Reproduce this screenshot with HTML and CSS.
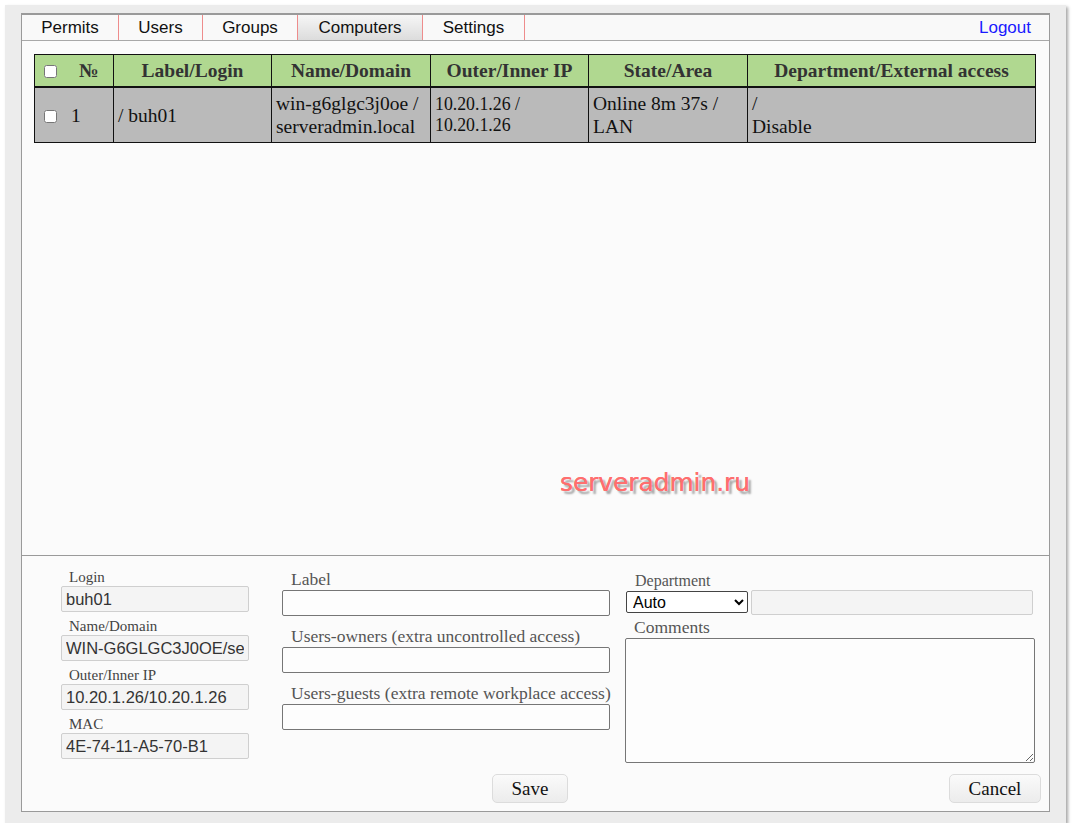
FILE: index.html
```html
<!DOCTYPE html>
<html>
<head>
<meta charset="utf-8">
<link rel="stylesheet" href="styles.css">
</head>
<body>
<div class="window">
  <div class="panel">
    <div class="tabbar">
      <div class="tab t-permits">Permits</div>
      <div class="tab t-users">Users</div>
      <div class="tab t-groups">Groups</div>
      <div class="tab t-computers active">Computers</div>
      <div class="tab t-settings">Settings</div>
      <a class="logout" href="#">Logout</a>
    </div>
    <div class="content">
      <table class="grid">
        <colgroup>
          <col style="width:79px"><col style="width:158px"><col style="width:159px"><col style="width:158px"><col style="width:159px"><col>
        </colgroup>
        <thead>
          <tr>
            <th class="c-first"><input type="checkbox" class="cb"><span class="num-h">№</span></th>
            <th>Label/Login</th>
            <th>Name/Domain</th>
            <th>Outer/Inner IP</th>
            <th>State/Area</th>
            <th>Department/External access</th>
          </tr>
        </thead>
        <tbody>
          <tr>
            <td class="c-first"><input type="checkbox" class="cb"><span class="num">1</span></td>
            <td>/ buh01</td>
            <td>win-g6glgc3j0oe /<br>serveradmin.local</td>
            <td class="ip">10.20.1.26 /<br>10.20.1.26</td>
            <td>Online 8m 37s /<br>LAN</td>
            <td>/<br>Disable</td>
          </tr>
        </tbody>
      </table>
      <div class="watermark">serveradmin.ru</div>
    </div>
    <div class="form">
      <div class="form-row">
        <div class="col-left">
          <label class="small-label">Login</label>
          <input class="ro" type="text" value="buh01" readonly>
          <label class="small-label gap">Name/Domain</label>
          <input class="ro" type="text" value="WIN-G6GLGC3J0OE/serveradmin.local" readonly>
          <label class="small-label gap">Outer/Inner IP</label>
          <input class="ro" type="text" value="10.20.1.26/10.20.1.26" readonly>
          <label class="small-label gap">MAC</label>
          <input class="ro" type="text" value="4E-74-11-A5-70-B1" readonly>
        </div>
        <div class="col-mid">
          <label class="big-label">Label</label>
          <input class="txt" type="text">
          <label class="big-label gap">Users-owners (extra uncontrolled access)</label>
          <input class="txt" type="text">
          <label class="big-label gap">Users-guests (extra remote workplace access)</label>
          <input class="txt" type="text">
        </div>
        <div class="col-right">
          <label class="dep-label">Department</label>
          <div class="dep-row">
            <select class="sel"><option>Auto</option></select>
            <input class="dis" type="text" disabled>
          </div>
          <label class="big-label com-label">Comments</label>
          <textarea class="comments"></textarea>
        </div>
      </div>
      <div class="buttons">
        <button class="btn save">Save</button>
        <button class="btn cancel">Cancel</button>
      </div>
    </div>
  </div>
</div>
</body>
</html>
```
FILE: styles.css
```css
html, body {
  margin: 0;
  padding: 0;
  background: #ffffff;
}

.window {
  margin: 5px 0 0 5px;
  width: 1061px;
  height: 818px;
  background: #ececec;
  box-shadow: 2px 2px 3px rgba(0, 0, 0, 0.35);
  overflow: hidden;
}

.panel {
  margin: 8px 0 0 16px;
  width: 1027px;
  height: 796px;
  border: 1px solid #9a9a9a;
  border-top: 2px solid #9a9a9a;
  background: #fbfbfb;
  display: flex;
  flex-direction: column;
}

.tabbar {
  height: 25px;
  border-bottom: 1px solid #a8a8a8;
  background: #f9f9f9;
  display: flex;
  align-items: stretch;
  font-family: "Liberation Sans", Arial, sans-serif;
  font-size: 17px;
  color: #111;
}

.tab {
  box-sizing: border-box;
  border-right: 1px solid #ee8c8c;
  line-height: 25px;
  text-align: center;
}

.t-permits { width: 97px; }
.t-users { width: 84px; }
.t-groups { width: 95px; }
.t-computers { width: 125px; }
.t-settings { width: 102px; }

.tab.active {
  background: linear-gradient(#f6f6f6, #dcdcdc);
}

.logout {
  margin-left: auto;
  margin-right: 18px;
  line-height: 25px;
  color: #1a1aff;
  text-decoration: none;
}

.content {
  height: 514px;
  padding: 13px 0 0 12px;
  box-sizing: border-box;
  position: relative;
}

.grid {
  width: 1002px;
  border-collapse: collapse;
  table-layout: fixed;
  font-family: "Liberation Serif", "Times New Roman", serif;
}

.grid th, .grid td {
  border: 1px solid #111;
}

.grid th {
  background: #b0d890;
  height: 31px;
  padding: 0 4px;
  font-size: 19.5px;
  font-weight: bold;
  color: #333;
  text-align: center;
  border-bottom-width: 2px;
  white-space: nowrap;
}

.grid td {
  background: #bababa;
  height: 54px;
  padding: 0 4px;
  font-size: 19.5px;
  line-height: 23px;
  color: #111;
  vertical-align: middle;
  white-space: nowrap;
}

.grid td.ip {
  font-size: 17.8px;
  line-height: 21px;
}

.grid .c-first {
  text-align: left;
  padding-left: 5px;
}

.cb {
  width: 13px;
  height: 13px;
  margin: 0 3px 0 4px;
  vertical-align: -1px;
}

.num-h {
  margin-left: 19px;
}

.num {
  margin-left: 11px;
}

.watermark {
  position: absolute;
  left: 538px;
  top: 427px;
  font-family: "DejaVu Sans", Verdana, sans-serif;
  font-size: 24.8px;
  color: #ff6e6e;
  text-shadow: 0 0 0.6px #ff6e6e, 3px 3px 2px rgba(0, 0, 0, 0.35);
}

.form {
  flex: 1;
  border-top: 1px solid #9a9a9a;
  padding: 12px 0 0 0;
  box-sizing: border-box;
  display: flex;
  flex-direction: column;
}

.form-row {
  display: flex;
  align-items: flex-start;
}

.col-left {
  margin: 1px 0 0 39px;
  width: 188px;
  display: flex;
  flex-direction: column;
}

.col-mid {
  margin-left: 33px;
  width: 328px;
  display: flex;
  flex-direction: column;
}

.col-right {
  margin: 4px 0 0 15px;
  width: 410px;
  display: flex;
  flex-direction: column;
}

.small-label {
  font-family: "Liberation Serif", "Times New Roman", serif;
  font-size: 15px;
  line-height: 17px;
  height: 17px;
  color: #444;
  padding-left: 8px;
}

.small-label.gap {
  margin-top: 6px;
}

.ro {
  box-sizing: border-box;
  width: 188px;
  height: 26px;
  border: 1px solid #cfcfcf;
  border-radius: 2px;
  background: #f4f4f4;
  font-family: "Liberation Sans", Arial, sans-serif;
  font-size: 16.5px;
  color: #333;
  padding: 0 4px;
  margin: 0;
  outline: none;
}

.big-label {
  font-family: "Liberation Serif", "Times New Roman", serif;
  font-size: 17.5px;
  line-height: 22px;
  height: 22px;
  color: #555;
  padding-left: 9px;
  white-space: nowrap;
}

.big-label.gap {
  margin-top: 9px;
}

.txt {
  box-sizing: border-box;
  width: 328px;
  height: 26px;
  border: 1px solid #767676;
  border-radius: 2px;
  background: #fdfdfd;
  margin: 0;
}

.dep-label {
  font-family: "Liberation Serif", "Times New Roman", serif;
  font-size: 16px;
  line-height: 18px;
  height: 18px;
  color: #555;
  padding-left: 10px;
}

.dep-row {
  display: flex;
  align-items: flex-start;
  height: 25px;
}

.sel {
  box-sizing: border-box;
  margin: 1px 0 0 1px;
  width: 122px;
  height: 22px;
  border: 1px solid #444;
  border-radius: 2px;
  background: #fff;
  font-family: "Liberation Sans", Arial, sans-serif;
  font-size: 16px;
  color: #000;
  padding: 0 2px;
}

.dis {
  box-sizing: border-box;
  margin: 0 0 0 3px;
  width: 282px;
  height: 25px;
  border: 1px solid #cfcfcf;
  border-radius: 2px;
  background: #f4f4f4;
}

.com-label {
  padding-left: 9px;
  margin-top: 1px;
}

.comments {
  box-sizing: border-box;
  width: 410px;
  height: 125px;
  border: 1px solid #767676;
  border-radius: 2px;
  background: #fdfdfd;
  margin: 0;
  display: block;
}

.buttons {
  display: flex;
  margin-top: 11px;
  padding-left: 470px;
}

.btn {
  box-sizing: border-box;
  height: 29px;
  border: 1px solid #dcdcdc;
  border-radius: 5px;
  background: linear-gradient(#fafafa, #ececec);
  font-family: "Liberation Serif", "Times New Roman", serif;
  font-size: 19px;
  color: #111;
  padding: 0;
}

.save {
  width: 76px;
}

.cancel {
  width: 92px;
  margin-left: 381px;
}
```
